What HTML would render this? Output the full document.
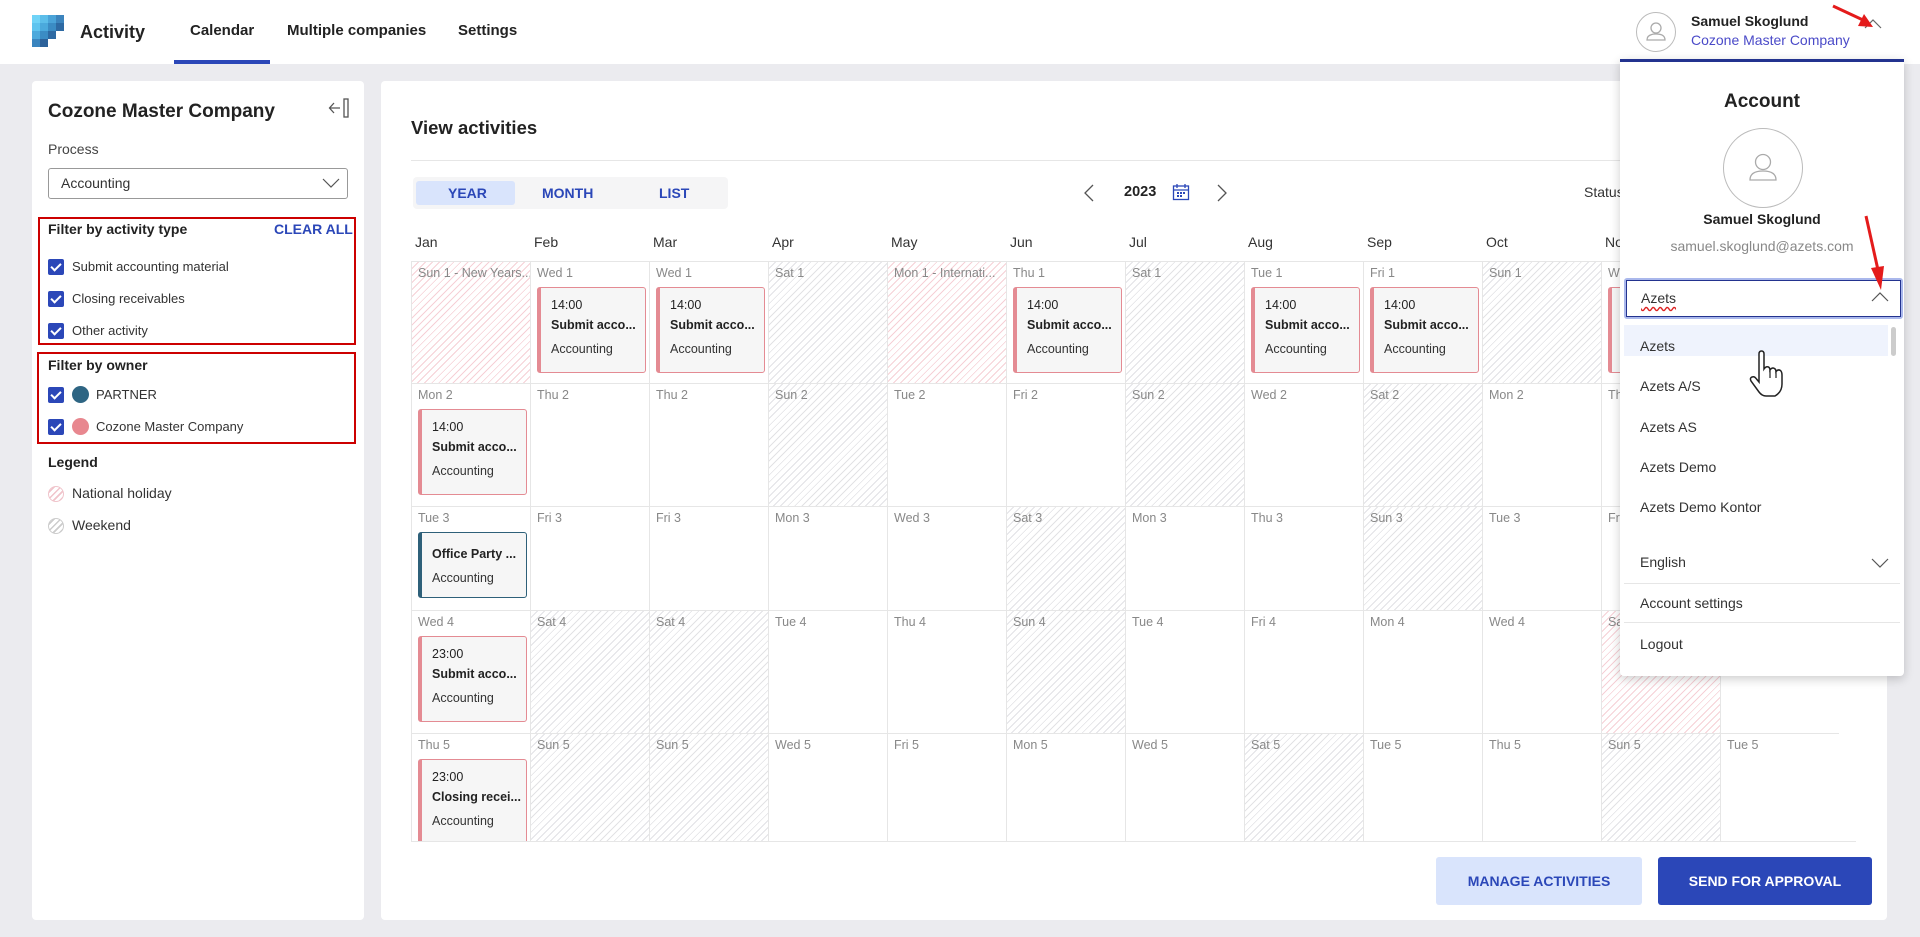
<!DOCTYPE html>
<html><head><meta charset="utf-8"><style>
*{box-sizing:border-box;margin:0;padding:0}
body{width:1920px;height:937px;overflow:hidden;background:#ebebef;font-family:"Liberation Sans",sans-serif;color:#222;position:relative}
.abs{position:absolute}
.hdr{position:absolute;left:0;top:0;width:1920px;height:64px;background:#fff}
.nav{position:absolute;top:22px;font-size:15px;font-weight:bold;color:#222}
.panel{position:absolute;background:#fff;border-radius:4px}
.cb{position:absolute;width:16px;height:16px;background:#2b47b8;border-radius:2px}
.cb:after{content:"";position:absolute;left:5px;top:2px;width:4px;height:8px;border:solid #fff;border-width:0 2px 2px 0;transform:rotate(45deg)}
.lbl{position:absolute;font-size:13px;color:#333}
.grid{position:absolute;left:411px;top:261px;width:1428px;height:580px;overflow:hidden;display:grid;grid-template-columns:repeat(12,119px);grid-template-rows:122px 123px 104px 123px 122px;border-left:1px solid #e6e6e6;border-top:1px solid #e6e6e6}
.c{border-right:1px solid #e6e6e6;border-bottom:1px solid #e6e6e6;position:relative;overflow:hidden}
.c .d{position:absolute;left:6px;top:4px;font-size:12.5px;color:#888;white-space:nowrap}
.h{background:repeating-linear-gradient(135deg,#fff 0 4px,#f6d0d6 4px 5px)}
.w{background:repeating-linear-gradient(135deg,#fff 0 4px,#e2e2e5 4px 5px)}
.ev{position:absolute;left:6px;right:3px;top:25px;height:86px;background:#f6f6f6;border:1px solid #e48b93;border-left:4px solid #e48b93;border-radius:3px;padding:10px 0 0 10px;font-size:12.5px;white-space:nowrap;overflow:hidden}
.ev b{display:block;margin-top:6px;font-size:12.5px;color:#222}
.ev i{display:block;font-style:normal;margin-top:10px;color:#333}
.ev.t{border-color:#2e6079;height:66px;padding-top:14px}
.ev.t b{margin-top:0}
.mon{position:absolute;top:234px;font-size:14px;color:#333}
.menu{position:absolute;left:1640px;font-size:14px;color:#333}
</style></head><body>
<div class="hdr"></div>
<svg class="abs" style="left:32px;top:15px" width="32" height="32">
<rect x="0" y="0" width="8" height="8" fill="#6fd3f7"/><rect x="8" y="0" width="8" height="8" fill="#5cbde9"/><rect x="16" y="0" width="8" height="8" fill="#4aa3d8"/><rect x="24" y="0" width="8" height="8" fill="#3c84bd"/>
<rect x="0" y="8" width="8" height="8" fill="#5ec4ef"/><rect x="8" y="8" width="8" height="8" fill="#4ba9dc"/><rect x="16" y="8" width="8" height="8" fill="#3b8cc4"/><rect x="24" y="8" width="8" height="8" fill="#2e6aa3"/>
<rect x="0" y="16" width="8" height="8" fill="#4ca9dc"/><rect x="8" y="16" width="8" height="8" fill="#3b8cc4"/><rect x="16" y="16" width="8" height="8" fill="#2e6aa3"/>
<rect x="0" y="24" width="8" height="8" fill="#3a85bf"/><rect x="8" y="24" width="8" height="8" fill="#2d629a"/>
</svg>
<div class="abs" style="left:80px;top:22px;font-size:18px;font-weight:bold;color:#222">Activity</div>
<div class="nav" style="left:190px">Calendar</div>
<div class="nav" style="left:287px">Multiple companies</div>
<div class="nav" style="left:458px">Settings</div>
<div class="abs" style="left:174px;top:60px;width:96px;height:4px;background:#2b47b8"></div>
<svg class="abs" style="left:1635px;top:11px" width="42" height="42"><circle cx="21" cy="21" r="19.5" fill="#fff" stroke="#bbb"/><circle cx="21" cy="17" r="5" fill="none" stroke="#aaa" stroke-width="1.3"/><path d="M12 29 Q12 23 21 23 Q30 23 30 29 Z" fill="none" stroke="#aaa" stroke-width="1.3"/></svg>
<div class="abs" style="left:1691px;top:13px;font-size:14px;font-weight:bold">Samuel Skoglund</div>
<div class="abs" style="left:1691px;top:32px;font-size:14px;color:#4a4ac8">Cozone Master Company</div>
<svg class="abs" style="left:1864px;top:19px" width="18" height="10"><path d="M1 9 L9 1 L17 9" fill="none" stroke="#666" stroke-width="1.2"/></svg>

<div class="panel" style="left:32px;top:81px;width:332px;height:839px"></div>
<div class="abs" style="left:48px;top:101px;font-size:19px;font-weight:bold">Cozone Master Company</div>
<svg class="abs" style="left:328px;top:97px" width="24" height="22"><path d="M12 11 H2 M6 6 L1.5 11 L6 16" fill="none" stroke="#555" stroke-width="1.3"/><rect x="16" y="2" width="4" height="18" fill="none" stroke="#555" stroke-width="1.3"/></svg>
<div class="abs" style="left:48px;top:141px;font-size:14px;color:#444">Process</div>
<div class="abs" style="left:48px;top:168px;width:300px;height:31px;border:1px solid #999;border-radius:3px"></div>
<div class="abs" style="left:61px;top:175px;font-size:14px;color:#333">Accounting</div>
<svg class="abs" style="left:322px;top:177px" width="18" height="12"><path d="M1 2 L9 10 L17 2" fill="none" stroke="#555" stroke-width="1.2"/></svg>
<div class="abs" style="left:38px;top:217px;width:318px;height:128px;border:2px solid #cc0000"></div>
<div class="abs" style="left:48px;top:221px;font-size:14px;font-weight:bold">Filter by activity type</div>
<div class="abs" style="left:274px;top:221px;font-size:14px;font-weight:bold;color:#2b47b8">CLEAR ALL</div>
<div class="cb" style="left:48px;top:259px"></div><div class="lbl" style="left:72px;top:259px">Submit accounting material</div>
<div class="cb" style="left:48px;top:291px"></div><div class="lbl" style="left:72px;top:291px">Closing receivables</div>
<div class="cb" style="left:48px;top:323px"></div><div class="lbl" style="left:72px;top:323px">Other activity</div>
<div class="abs" style="left:37px;top:352px;width:319px;height:92px;border:2px solid #cc0000"></div>
<div class="abs" style="left:48px;top:357px;font-size:14px;font-weight:bold">Filter by owner</div>
<div class="cb" style="left:48px;top:387px"></div><div class="abs" style="left:72px;top:386px;width:17px;height:17px;border-radius:50%;background:#2e6583"></div><div class="lbl" style="left:96px;top:387px">PARTNER</div>
<div class="cb" style="left:48px;top:419px"></div><div class="abs" style="left:72px;top:418px;width:17px;height:17px;border-radius:50%;background:#e8878f"></div><div class="lbl" style="left:96px;top:419px">Cozone Master Company</div>
<div class="abs" style="left:48px;top:454px;font-size:14px;font-weight:bold">Legend</div>
<div class="abs" style="left:48px;top:486px;width:16px;height:16px;border-radius:50%;border:1px solid #f0c4cb;background:repeating-linear-gradient(135deg,#fff 0 3px,#f0c4cb 3px 4.5px)"></div>
<div class="abs" style="left:72px;top:485px;font-size:14px;color:#333">National holiday</div>
<div class="abs" style="left:48px;top:518px;width:16px;height:16px;border-radius:50%;border:1px solid #ccc;background:repeating-linear-gradient(135deg,#fff 0 3px,#ccc 3px 4.5px)"></div>
<div class="abs" style="left:72px;top:517px;font-size:14px;color:#333">Weekend</div>

<div class="panel" style="left:381px;top:81px;width:1506px;height:839px"></div>
<div class="abs" style="left:411px;top:117px;font-size:18.5px;font-weight:bold">View activities</div>
<div class="abs" style="left:411px;top:160px;width:1430px;height:1px;background:#e6e6e6"></div>
<div class="abs" style="left:413px;top:177px;width:315px;height:32px;background:#f5f5f6;border-radius:4px"></div>
<div class="abs" style="left:416px;top:181px;width:99px;height:24px;background:#d9e4fc;border-radius:3px"></div>
<div class="abs" style="left:448px;top:185px;font-size:14px;font-weight:bold;color:#2b47b8">YEAR</div>
<div class="abs" style="left:542px;top:185px;font-size:14px;font-weight:bold;color:#2b47b8">MONTH</div>
<div class="abs" style="left:659px;top:185px;font-size:14px;font-weight:bold;color:#2b47b8">LIST</div>
<svg class="abs" style="left:1083px;top:183px" width="12" height="20"><path d="M10 2 L2 10 L10 18" fill="none" stroke="#555" stroke-width="1.3"/></svg>
<div class="abs" style="left:1124px;top:184px;font-size:14.5px;font-weight:bold">2023</div>
<svg class="abs" style="left:1172px;top:183px" width="18" height="18"><rect x="1.5" y="3" width="15" height="13.5" fill="none" stroke="#2b47b8" stroke-width="1.3"/><path d="M1.5 7 H16.5 M5 1 V5 M13 1 V5" stroke="#2b47b8" stroke-width="1.3"/><rect x="5" y="9" width="2" height="2" fill="#2b47b8"/><rect x="8" y="9" width="2" height="2" fill="#2b47b8"/><rect x="11" y="9" width="2" height="2" fill="#2b47b8"/><rect x="5" y="12" width="2" height="2" fill="#2b47b8"/><rect x="8" y="12" width="2" height="2" fill="#2b47b8"/></svg>
<svg class="abs" style="left:1216px;top:183px" width="12" height="20"><path d="M2 2 L10 10 L2 18" fill="none" stroke="#555" stroke-width="1.3"/></svg>
<div class="abs" style="left:1584px;top:184px;font-size:14px;color:#333">Status</div>

<div class="mon" style="left:415px">Jan</div><div class="mon" style="left:534px">Feb</div><div class="mon" style="left:653px">Mar</div><div class="mon" style="left:772px">Apr</div><div class="mon" style="left:891px">May</div><div class="mon" style="left:1010px">Jun</div><div class="mon" style="left:1129px">Jul</div><div class="mon" style="left:1248px">Aug</div><div class="mon" style="left:1367px">Sep</div><div class="mon" style="left:1486px">Oct</div><div class="mon" style="left:1605px">Nov</div><div class="mon" style="left:1724px">Dec</div>

<div class="grid">
<div class="c h"><span class="d">Sun 1 - New Years...</span></div>
<div class="c"><span class="d">Wed 1</span><div class="ev">14:00<b>Submit acco...</b><i>Accounting</i></div></div>
<div class="c"><span class="d">Wed 1</span><div class="ev">14:00<b>Submit acco...</b><i>Accounting</i></div></div>
<div class="c w"><span class="d">Sat 1</span></div>
<div class="c h"><span class="d">Mon 1 - Internati...</span></div>
<div class="c"><span class="d">Thu 1</span><div class="ev">14:00<b>Submit acco...</b><i>Accounting</i></div></div>
<div class="c w"><span class="d">Sat 1</span></div>
<div class="c"><span class="d">Tue 1</span><div class="ev">14:00<b>Submit acco...</b><i>Accounting</i></div></div>
<div class="c"><span class="d">Fri 1</span><div class="ev">14:00<b>Submit acco...</b><i>Accounting</i></div></div>
<div class="c w"><span class="d">Sun 1</span></div>
<div class="c"><span class="d">Wed 1</span><div class="ev">14:00<b>Submit acco...</b><i>Accounting</i></div></div>
<div class="c"><span class="d">Fri 1</span><div class="ev">14:00<b>Submit acco...</b><i>Accounting</i></div></div>

<div class="c"><span class="d">Mon 2</span><div class="ev">14:00<b>Submit acco...</b><i>Accounting</i></div></div>
<div class="c"><span class="d">Thu 2</span></div><div class="c"><span class="d">Thu 2</span></div>
<div class="c w"><span class="d">Sun 2</span></div><div class="c"><span class="d">Tue 2</span></div><div class="c"><span class="d">Fri 2</span></div>
<div class="c w"><span class="d">Sun 2</span></div><div class="c"><span class="d">Wed 2</span></div><div class="c w"><span class="d">Sat 2</span></div>
<div class="c"><span class="d">Mon 2</span></div><div class="c"><span class="d">Thu 2</span></div><div class="c w"><span class="d">Sat 2</span></div>

<div class="c"><span class="d">Tue 3</span><div class="ev t"><b>Office Party ...</b><i>Accounting</i></div></div>
<div class="c"><span class="d">Fri 3</span></div><div class="c"><span class="d">Fri 3</span></div><div class="c"><span class="d">Mon 3</span></div><div class="c"><span class="d">Wed 3</span></div>
<div class="c w"><span class="d">Sat 3</span></div><div class="c"><span class="d">Mon 3</span></div><div class="c"><span class="d">Thu 3</span></div><div class="c w"><span class="d">Sun 3</span></div>
<div class="c"><span class="d">Tue 3</span></div><div class="c"><span class="d">Fri 3</span></div><div class="c w"><span class="d">Sun 3</span></div>

<div class="c"><span class="d">Wed 4</span><div class="ev">23:00<b>Submit acco...</b><i>Accounting</i></div></div>
<div class="c w"><span class="d">Sat 4</span></div><div class="c w"><span class="d">Sat 4</span></div><div class="c"><span class="d">Tue 4</span></div><div class="c"><span class="d">Thu 4</span></div>
<div class="c w"><span class="d">Sun 4</span></div><div class="c"><span class="d">Tue 4</span></div><div class="c"><span class="d">Fri 4</span></div><div class="c"><span class="d">Mon 4</span></div>
<div class="c"><span class="d">Wed 4</span></div><div class="c h"><span class="d">Sat 4</span></div><div class="c"><span class="d">Mon 4</span></div>

<div class="c"><span class="d">Thu 5</span><div class="ev">23:00<b>Closing recei...</b><i>Accounting</i></div></div>
<div class="c w"><span class="d">Sun 5</span></div><div class="c w"><span class="d">Sun 5</span></div><div class="c"><span class="d">Wed 5</span></div><div class="c"><span class="d">Fri 5</span></div>
<div class="c"><span class="d">Mon 5</span></div><div class="c"><span class="d">Wed 5</span></div><div class="c w"><span class="d">Sat 5</span></div><div class="c"><span class="d">Tue 5</span></div>
<div class="c"><span class="d">Thu 5</span></div><div class="c w"><span class="d">Sun 5</span></div><div class="c"><span class="d">Tue 5</span></div>
</div>
<div class="abs" style="left:411px;top:841px;width:1445px;height:1px;background:#e6e6e6"></div>

<div class="abs" style="left:1436px;top:857px;width:206px;height:48px;background:#d9e4fc;border-radius:3px;font-size:14px;font-weight:bold;color:#2b47b8;text-align:center;line-height:48px">MANAGE ACTIVITIES</div>
<div class="abs" style="left:1658px;top:857px;width:214px;height:48px;background:#2b47b8;border-radius:3px;font-size:14px;font-weight:bold;color:#fff;text-align:center;line-height:48px">SEND FOR APPROVAL</div>

<div class="abs" style="left:1620px;top:59px;width:284px;height:617px;background:#fff;border-top:3px solid #23338f;border-radius:0 0 4px 4px;box-shadow:0 3px 10px rgba(0,0,0,0.2)"></div>
<div class="abs" style="left:1620px;top:91px;width:284px;text-align:center;font-size:19px;font-weight:bold">Account</div>
<svg class="abs" style="left:1722px;top:127px" width="82" height="82"><circle cx="41" cy="41" r="39.5" fill="#fff" stroke="#bbb"/><circle cx="41" cy="35" r="7.5" fill="none" stroke="#aaa" stroke-width="1.3"/><path d="M28 53 Q28 44 41 44 Q54 44 54 53 Z" fill="none" stroke="#aaa" stroke-width="1.3"/></svg>
<div class="abs" style="left:1620px;top:211px;width:284px;text-align:center;font-size:14px;font-weight:bold">Samuel Skoglund</div>
<div class="abs" style="left:1620px;top:238px;width:284px;text-align:center;font-size:14px;color:#888">samuel.skoglund@azets.com</div>
<div class="abs" style="left:1624px;top:278px;width:279px;height:41px;border:2px solid #aab8ec;border-radius:3px"></div>
<div class="abs" style="left:1626px;top:280px;width:275px;height:37px;border:1px solid #23338f"></div>
<div class="abs" style="left:1641px;top:290px;font-size:14px;color:#333;text-decoration:underline wavy #d22;text-underline-offset:3px">Azets</div>
<svg class="abs" style="left:1871px;top:292px" width="18" height="10"><path d="M1 9 L9 1 L17 9" fill="none" stroke="#555" stroke-width="1.2"/></svg>
<div class="abs" style="left:1624px;top:325px;width:264px;height:31px;background:#eff3fd"></div>
<div class="abs" style="left:1891px;top:327px;width:5px;height:29px;background:#ccc;border-radius:3px"></div>
<div class="menu" style="top:338px">Azets</div>
<div class="menu" style="top:378px">Azets A/S</div>
<div class="menu" style="top:419px">Azets AS</div>
<div class="menu" style="top:459px">Azets Demo</div>
<div class="menu" style="top:499px">Azets Demo Kontor</div>
<div class="menu" style="top:554px">English</div>
<svg class="abs" style="left:1871px;top:558px" width="18" height="10"><path d="M1 1 L9 9 L17 1" fill="none" stroke="#555" stroke-width="1.2"/></svg>
<div class="abs" style="left:1624px;top:583px;width:276px;height:1px;background:#e6e6e6"></div>
<div class="menu" style="top:595px">Account settings</div>
<div class="abs" style="left:1624px;top:622px;width:276px;height:1px;background:#e6e6e6"></div>
<div class="menu" style="top:636px">Logout</div>

<svg class="abs" style="left:1749px;top:350px" width="38" height="50"><path d="M10 4 Q10 1 12.5 1 Q15 1 15 4 V19 Q17 16 19.5 17 Q21 18 21 20 Q23 17 25.5 18.5 Q27 19.5 27 21.5 Q29 19 31.5 20.5 Q33 22 33 25 V34 Q33 42 26 46 H17 Q13 46 10 42 L2 31 Q0.5 28 3 27 Q5.5 26 7.5 29 L10 32 Z" fill="#fff" stroke="#222" stroke-width="1.5"/><path d="M21 20 V28 M27 21.5 V28" stroke="#222" stroke-width="1.2"/></svg>

<svg class="abs" style="left:1825px;top:0" width="95" height="320">
<path d="M8 6 L38 20" stroke="#e41b1b" stroke-width="3"/><path d="M48 27 L33 26 L39 14 Z" fill="#e41b1b"/>
<path d="M41 216 L53 270" stroke="#e41b1b" stroke-width="3"/><path d="M56 290 L46 268 L59 266 Z" fill="#e41b1b"/>
</svg>
</body></html>
